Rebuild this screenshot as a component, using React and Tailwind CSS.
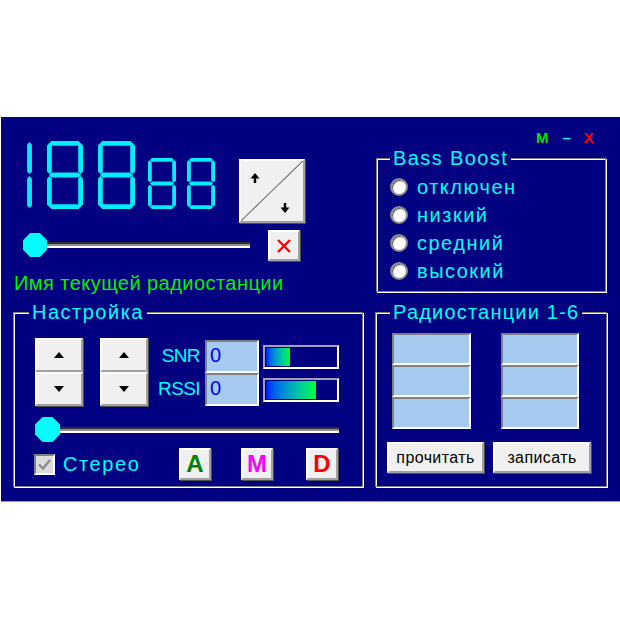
import React from "react";

// --- seven segment display (all segments lit) ---
function hseg(x1, x2, yc, t) {
  return `${x1},${yc} ${x1 + t},${yc - t} ${x2 - t},${yc - t} ${x2},${yc} ${x2 - t},${yc + t} ${x1 + t},${yc + t}`;
}
function vseg(xc, y1, y2, t) {
  return `${xc},${y1} ${xc + t},${y1 + t} ${xc + t},${y2 - t} ${xc},${y2} ${xc - t},${y2 - t} ${xc - t},${y1 + t}`;
}
function eight(x, y, w, h, t) {
  const m = y + h / 2;
  return [
    hseg(x + 2, x + w - 2, y + t, t),
    hseg(x + 2, x + w - 2, m, t),
    hseg(x + 2, x + w - 2, y + h - t, t),
    vseg(x + t, y + 2, m - 1, t),
    vseg(x + w - t, y + 2, m - 1, t),
    vseg(x + t, m + 1, y + h - 2, t),
    vseg(x + w - t, m + 1, y + h - 2, t),
  ];
}

function Display() {
  const segs = [
    vseg(2.5, 1, 33, 2.4),
    vseg(2.5, 35, 67, 2.4),
    ...eight(20, 0, 36, 68, 2.4),
    ...eight(71, 0, 37, 68, 2.4),
    ...eight(121, 17, 28, 51, 1.9),
    ...eight(160, 17, 28, 51, 1.9),
  ];
  return (
    <svg width="190" height="70" viewBox="0 0 190 70" className="block ml-[14px]">
      {segs.map((p, i) => (
        <polygon key={i} points={p} fill="#00eeff" />
      ))}
    </svg>
  );
}

const raised =
  "bg-[#f0f0f0] border-2 border-t-white border-l-white border-r-[#a0a0a0] border-b-[#a0a0a0] shadow-[1px_1px_0_#505050]";
const sunken =
  "border-2 border-t-[#808080] border-l-[#808080] border-b-white border-r-white";

function Slider({ className }) {
  return (
    <div className={"relative " + className}>
      <div className="absolute left-[10px] right-0 top-1/2 -translate-y-1/2 h-[6px] border-t-2 border-t-[#303030] border-b-2 border-b-white bg-[#909090]" />
      <div className="absolute left-0 top-0 h-full aspect-square bg-[#00ffff] [clip-path:polygon(30%_0,70%_0,100%_30%,100%_70%,70%_100%,30%_100%,0_70%,0_30%)]" />
    </div>
  );
}

function Group({ title, className, legendClass, children }) {
  return (
    <fieldset className={"border border-[#808080] shadow-[inset_1px_1px_0_#ffffff,1px_1px_0_#ffffff] min-w-0 " + className}>
      <legend className={"px-[3px] bg-[#000080] text-[20px] leading-[23px] text-[#00ffff] " + legendClass}>{title}</legend>
      {children}
    </fieldset>
  );
}

function Spin() {
  const tri = (up) => (
    <svg width="10" height="6" viewBox="0 0 10 6">
      <polygon points={up ? "0,6 5,0 10,6" : "0,0 10,0 5,6"} fill="#000" />
    </svg>
  );
  return (
    <div className="flex flex-col w-[48px]">
      <div className={raised + " h-[34px] flex items-center justify-center"}>{tri(true)}</div>
      <div className={raised + " h-[34px] flex items-center justify-center"}>{tri(false)}</div>
    </div>
  );
}

function Radio({ label }) {
  return (
    <div className="h-[28px] flex items-center">
      <div className="ml-[13px] w-[18px] h-[18px] rounded-full bg-white border-2 border-[#8a8a8a] shadow-[inset_1px_1px_1px_#505050]" />
      <span className="ml-[9px] text-[20px] tracking-[1.5px] text-[#00ffff]">{label}</span>
    </div>
  );
}

export default function App() {
  return (
    <div className="w-[620px] h-[620px] bg-white pt-[117px] pl-[1px] font-['Liberation_Sans',Arial,sans-serif]">
      <div className="w-[619px] h-[385px] bg-[#000080] border-b border-[#9a9a9a] flex flex-col">
        {/* top row */}
        <div className="flex h-[184px] pl-[12px]">
          <div className="w-[350px] flex flex-col">
            <div className="flex items-start pt-[24px]">
              <Display />
              <div className={raised + " ml-[22px] mt-[18px] w-[66px] h-[64px]"}>
                <svg width="62" height="60" viewBox="0 0 62 60" className="block">
                  <line x1="0" y1="60" x2="62" y2="0" stroke="#808080" strokeWidth="1.5" />
                  <line x1="1.5" y1="60" x2="62" y2="1.5" stroke="#ffffff" strokeWidth="1" />
                  <polygon points="14,12 18.5,17.5 9.5,17.5" fill="#000" />
                  <rect x="12.8" y="17" width="2.4" height="5" fill="#000" />
                  <polygon points="44,52 48.5,46.5 39.5,46.5" fill="#000" />
                  <rect x="42.8" y="42" width="2.4" height="5" fill="#000" />
                </svg>
              </div>
            </div>
            <div className="flex items-start mt-[7px]">
              <Slider className="ml-[10px] mt-[3px] w-[227px] h-[24px]" />
              <div className={raised + " ml-[18px] w-[32px] h-[31px] flex items-center justify-center"}>
                <svg width="14" height="14" viewBox="0 0 14 14">
                  <path d="M1 1 L13 13 M13 1 L1 13" stroke="#ff0000" strokeWidth="2.4" />
                </svg>
              </div>
            </div>
            <div className="mt-[10px] ml-[1px] text-[20px] leading-[24px] tracking-[0.45px] text-[#00f000]">
              Имя текущей радиостанции
            </div>
          </div>

          <div className="ml-[12px] w-[232px] flex flex-col pt-[13px]">
            <div className="flex h-[16px] leading-[16px] text-[15px] font-bold">
              <span className="ml-[161px] text-[#00e000]">M</span>
              <span className="ml-[14px] text-[#00ffff]">–</span>
              <span className="ml-[13px] text-[#ff0000]">X</span>
            </div>
            <Group title="Bass Boost" className="mt-[1px] ml-[1px] w-[230px] h-[145px]" legendClass="ml-[13px] tracking-[1.4px]">
              <div className="mt-[3px]">
                <Radio label="отключен" />
                <Radio label="низкий" />
                <Radio label="средний" />
                <Radio label="высокий" />
              </div>
            </Group>
          </div>
        </div>

        {/* bottom row */}
        <div className="flex pl-[12px]">
          <Group title="Настройка" className="w-[350px] h-[186px]" legendClass="ml-[15px] tracking-[1.5px]">
            <div className="flex items-start mt-[14px]">
              <div className="ml-[21px]"><Spin /></div>
              <div className="ml-[17px]"><Spin /></div>
              <div className="w-[52px] mt-[2px] flex flex-col text-[19px] tracking-[-0.6px] text-[#00ffff]">
                <div className="h-[33px] flex items-center justify-end">SNR</div>
                <div className="h-[33px] flex items-center justify-end">RSSI</div>
              </div>
              <div className="ml-[5px] mt-[2px] flex flex-col">
                {[0, 1].map((i) => (
                  <div key={i} className={sunken + " w-[54px] h-[33px] bg-[#a6caf0] text-[20px] leading-[26px] text-[#0000ff] pl-[3px]"}>0</div>
                ))}
              </div>
              <div className="ml-[4px] mt-[2px] flex flex-col">
                {[24, 50].map((w, i) => (
                  <div key={i} className="h-[33px] flex items-center">
                    <div className="w-[76px] h-[24px] border-2 border-t-[#a0a0b0] border-l-[#a0a0b0] border-b-white border-r-white p-[1px]">
                      <div className="h-full bg-linear-to-r from-[#0000ff] to-[#00ff00]" style={{ width: w }} />
                    </div>
                  </div>
                ))}
              </div>
            </div>
            <Slider className="mt-[11px] ml-[21px] w-[304px] h-[25px]" />
            <div className="mt-[6px] flex items-center h-[32px]">
              <div className="w-[165px] flex items-center">
                <div className={sunken + " ml-[20px] w-[21px] h-[21px] bg-[#dcdcdc] flex items-center justify-center"}>
                  <svg width="15" height="15" viewBox="0 0 15 15">
                    <path d="M2 7.5 L6 11.5 L13 3" stroke="#8a8a8a" strokeWidth="2.4" fill="none" />
                  </svg>
                </div>
                <span className="ml-[8px] text-[20px] tracking-[1.6px] text-[#00ffff]">Стерео</span>
              </div>
              <div className={raised + " w-[32px] h-[32px] flex items-center justify-center text-[24px] font-bold text-[#008000]"}>A</div>
              <div className={raised + " ml-[30px] w-[32px] h-[32px] flex items-center justify-center text-[24px] font-bold text-[#ff00ff]"}>M</div>
              <div className={raised + " ml-[33px] w-[32px] h-[32px] flex items-center justify-center text-[24px] font-bold text-[#ff0000]"}>D</div>
            </div>
          </Group>

          <Group title="Радиостанции 1-6" className="ml-[12px] w-[232px] h-[186px]" legendClass="ml-[14px] tracking-[1.2px]">
            <div className="flex mt-[9px]">
              <div className="ml-[16px] w-[79px] flex flex-col">
                {[0, 1, 2].map((i) => (
                  <div key={i} className={sunken + " h-[32px] bg-[#a6caf0]"} />
                ))}
              </div>
              <div className="ml-[30px] w-[78px] flex flex-col">
                {[0, 1, 2].map((i) => (
                  <div key={i} className={sunken + " h-[32px] bg-[#a6caf0]"} />
                ))}
              </div>
            </div>
            <div className="flex mt-[13px] ml-[11px] gap-[9px] text-[16px] tracking-[0.4px] text-black">
              <div className={raised + " w-[97px] h-[31px] flex items-center justify-center"}>прочитать</div>
              <div className={raised + " w-[98px] h-[31px] flex items-center justify-center"}>записать</div>
            </div>
          </Group>
        </div>
      </div>
    </div>
  );
}
